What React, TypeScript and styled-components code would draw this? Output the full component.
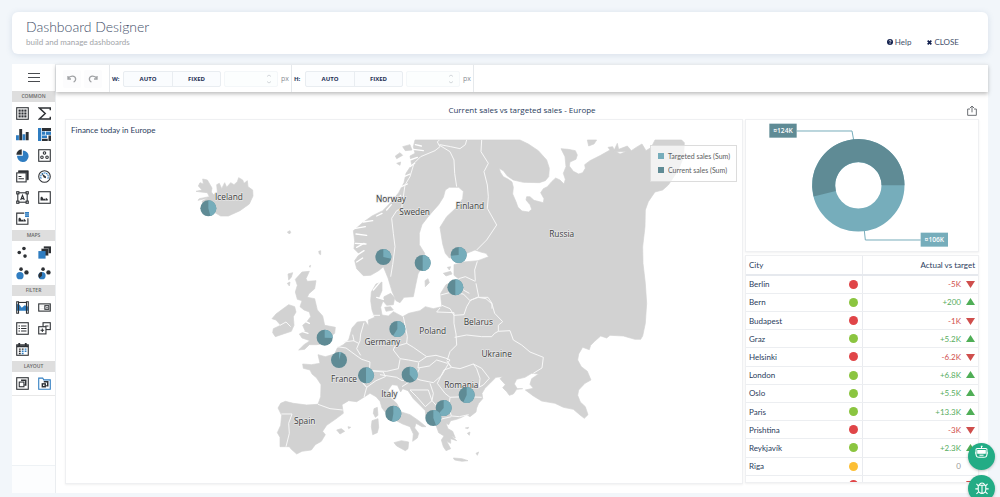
import React from 'react';
import styled, { createGlobalStyle, css } from 'styled-components';

const DARK = '#5f8b95';
const LIGHT = '#76adbb';
const INK = '#2a3c5c';
const BLUE = '#2f7dc1';
const COAL = '#2e3135';

const Global = createGlobalStyle`
  * { box-sizing: border-box; }
  body {
    margin: 0;
    background: #f2f6fa;
    color: ${INK};
    font-family: Lato, "Open Sans", sans-serif;
    font-size: 8px;
    line-height: 12px;
    overflow: hidden;
  }
  button, input { font: inherit; color: inherit; }
`;

const Page = styled.div`
  min-height: 100vh;
  display: flex;
  flex-direction: column;
  gap: 10px;
  padding: 12px 12px 4px;
`;

const Header = styled.header`
  display: flex;
  justify-content: space-between;
  align-items: flex-end;
  padding: 6px 29px 6px 14px;
  background: #fff;
  border-radius: 6px;
  box-shadow: 0 1px 6px rgba(90, 120, 160, 0.18);
`;

const Heading = styled.h1`
  margin: 0;
  font-size: 14px;
  line-height: 18px;
  font-weight: 300;
  color: #44506a;
`;

const SubHeading = styled.p`
  margin: 0;
  font-size: 8px;
  line-height: 12px;
  font-weight: 400;
  color: #a2a4a8;
`;

const HeaderActions = styled.div`
  display: flex;
  gap: 16px;
`;

const HeaderButton = styled.button`
  display: flex;
  align-items: center;
  gap: 2px;
  padding: 0;
  border: 0;
  background: none;
  font-size: 8px;
  line-height: 12px;
  font-weight: 400;
  color: #44506a;
`;

const Workspace = styled.main`
  flex: 1;
  display: flex;
  background: #fff;
`;

const Sidebar = styled.nav`
  display: flex;
  flex-direction: column;
  width: 44px;
  flex-shrink: 0;
  border-right: 1px solid #eaedf0;
`;

const MenuButton = styled.button`
  display: flex;
  align-items: center;
  justify-content: center;
  height: 27px;
  padding: 0;
  border: 0;
  background: #fff;
`;

const SectionLabel = styled.h2`
  margin: 0;
  background: #dedede;
  color: #666;
  font-family: "Open Sans", sans-serif;
  font-size: 5px;
  line-height: 11px;
  font-weight: 600;
  text-align: center;
`;

const ToolGrid = styled.div`
  display: grid;
  grid-template-columns: 1fr 1fr;
  grid-auto-rows: 21px;
  padding-bottom: 2px;
`;

const ToolButton = styled.button`
  display: flex;
  align-items: center;
  justify-content: center;
  padding: 1px 0 0;
  border: 0;
  background: none;
`;

const SidebarFooter = styled.div`
  margin-top: auto;
  height: 28px;
  border-top: 1px solid #eef2f5;
  background: #fcfdfe;
`;

const SidebarFill = styled.div`
  flex: 1;
  border-top: 1px solid #e8e8e8;
`;

const Main = styled.div`
  flex: 1;
  min-width: 0;
  display: flex;
  flex-direction: column;
`;

const Toolbar = styled.div`
  display: flex;
  height: 28px;
  background: #fff;
  border-top: 1px solid #e8ebee;
  box-shadow: 0 2px 4px rgba(0, 0, 0, 0.26);
`;

const ToolbarGroup = styled.div<{ $pad?: boolean }>`
  display: flex;
  align-items: center;
  gap: 3px;
  padding: 0 ${p => (p.$pad ? 7 : 2)}px;
  border-right: 1px solid #e6e9ec;
`;

const HistoryButton = styled.button`
  display: flex;
  align-items: center;
  justify-content: center;
  width: 18px;
  height: 18px;
  padding: 0;
  border: 0;
  border-radius: 2px;
  background: #fcfcfd;
`;

const Caption = styled.span<{ $strong?: boolean }>`
  width: 8px;
  font-family: "Open Sans", sans-serif;
  font-size: ${p => (p.$strong ? 6 : 7)}px;
  font-weight: ${p => (p.$strong ? 700 : 400)};
  color: ${p => (p.$strong ? '#26365a' : '#8b8f96')};
  white-space: nowrap;
`;

const Segments = styled.div`
  display: flex;
  height: 16px;
  border: 1px solid #e9edf1;
  border-radius: 2px;
  background: #fafcfe;
`;

const Segment = styled.button`
  width: 48px;
  padding: 0;
  border: 0;
  background: none;
  font-family: "Open Sans", sans-serif;
  font-size: 6px;
  font-weight: 700;
  color: #1f2f55;
  & + & { border-left: 1px solid #e9edf1; }
`;

const Spin = styled.label`
  display: flex;
  align-items: center;
  width: 54px;
  height: 16px;
  padding-right: 6px;
  border: 1px solid #f4f7f9;
  border-radius: 2px;
  background: #fcfefe;
`;

const SpinInput = styled.input`
  flex: 1;
  min-width: 0;
  padding: 0 3px;
  border: 0;
  outline: 0;
  background: none;
`;

const Board = styled.section`
  flex: 1;
  display: flex;
  flex-direction: column;
  padding: 9px;
`;

const BoardTitle = styled.div`
  display: grid;
  grid-template-columns: 1fr auto 1fr;
  align-items: center;
  height: 18px;
`;

const BoardName = styled.h2`
  grid-column: 2;
  margin: 0;
  font-family: "Open Sans", sans-serif;
  font-size: 8px;
  line-height: 12px;
  font-weight: 400;
`;

const ShareButton = styled.button`
  justify-self: end;
  display: flex;
  padding: 0;
  margin-right: 2px;
  border: 0;
  background: none;
`;

const Columns = styled.div`
  flex: 1;
  display: grid;
  grid-template-columns: minmax(0, 678fr) minmax(0, 234fr);
  gap: 2px;
`;

const card = css`
  background: #fff;
  border: 1px solid #eff0f2;
  box-shadow: 0 1px 2px rgba(0, 0, 0, 0.06);
`;

const MapCard = styled.article`
  ${card}
  position: relative;
  padding: 4px 0 0;
`;

const MapTitle = styled.h3`
  margin: 0;
  padding: 0 5px;
  font-size: 8px;
  line-height: 12px;
  font-weight: 400;
`;

const MapSvg = styled.svg`
  display: block;
  width: 100%;
`;

const Legend = styled.ul`
  position: absolute;
  top: 25px;
  right: 5px;
  margin: 0;
  padding: 3px 7px 4px;
  list-style: none;
  width: 87px;
  border: 1px solid #dcdcdc;
  background: rgba(255, 255, 255, 0.7);
  color: #5b5d60;
  font-size: 7px;
  line-height: 14px;
`;

const LegendItem = styled.li<{ $color: string }>`
  display: flex;
  align-items: center;
  gap: 4px;
  white-space: nowrap;
  &::before {
    content: '';
    flex-shrink: 0;
    width: 6px;
    height: 6px;
    background: ${p => p.$color};
  }
`;

const RightColumn = styled.div`
  display: grid;
  grid-template-rows: 133px 228px;
  gap: 3px;
`;

const DonutCard = styled.article`
  ${card}
`;

const TableCard = styled.article`
  ${card}
  overflow: hidden;
`;

const Table = styled.table`
  width: 100%;
  height: 238px;
  border-collapse: collapse;
  table-layout: fixed;
`;

const Th = styled.th<{ $right?: boolean }>`
  height: 19px;
  padding: 0 3px;
  border-bottom: 2px solid #e6e9ee;
  border-right: ${p => (p.$right ? 0 : 1)}px solid #e9ebef;
  font-weight: 400;
  text-align: ${p => (p.$right ? 'right' : 'left')};
`;

const Td = styled.td`
  height: 18px;
  padding: 0 3px;
  border-bottom: 1px solid #eceef1;
  & + & { border-left: 1px solid #e9ebef; }
`;

const Cell = styled.div<{ $end?: boolean; $color?: string }>`
  display: flex;
  align-items: center;
  justify-content: ${p => (p.$end ? 'flex-end' : 'space-between')};
  gap: 5px;
  padding-right: ${p => (p.$end ? 0 : 1)}px;
  color: ${p => p.$color || INK};
`;

const Dot = styled.span<{ $color: string }>`
  width: 9px;
  height: 9px;
  margin-left: auto;
  border-radius: 50%;
  background: ${p => p.$color};
`;

const FloatStack = styled.div`
  position: fixed;
  right: 5px;
  bottom: -5px;
  display: flex;
  flex-direction: column;
  gap: 5px;
`;

const FloatButton = styled.button<{ $raised?: boolean }>`
  display: flex;
  align-items: center;
  justify-content: center;
  width: 27px;
  height: 27px;
  padding: 0 0 ${p => (p.$raised ? 8 : 2)}px;
  border: 0;
  border-radius: 50%;
  background: #22ac85;
  box-shadow: 0 1px 3px rgba(0, 0, 0, 0.25);
`;

const Frame = ({ size = 32 }: { size?: number }) => (
  <rect x="2" y="2" width={size} height={size} fill="none" stroke={COAL} strokeWidth="3" />
);

const Picture = () => (
  <path d="M7 26v-8l4-3 5 8 4-3 2 6zM22 26v-7l5 4v3z" fill={COAL} />
);

const icons: Record<string, React.ReactNode> = {
  Table: (
    <>
      <Frame />
      {[7, 15, 23].map(y => [7, 15, 23].map(x => <rect key={`${x}-${y}`} x={x} y={y} width="6" height="6" fill={COAL} />))}
    </>
  ),
  Formula: <path d="M34 9V3H4l16 15L4 33h30v-6" fill="none" stroke={COAL} strokeWidth="4" />,
  'Bar chart': (
    <>
      <path d="M0 20h8v14H0zM18 17h8v17h-8z" fill={BLUE} />
      <path d="M9 3h8v31H9zM27 11h8v23h-8z" fill={COAL} />
    </>
  ),
  Treemap: (
    <>
      <path d="M0 0h9v36H0zM11 10h9v9h-9zM11 21h14v7H11z" fill={BLUE} />
      <path d="M11 0h25v8H11zM11 30h16v6H11zM29 21h7v15h-7z" fill={COAL} />
      <path d="M22 10h14v9H22z" fill={BLUE} />
    </>
  ),
  'Pie chart': (
    <>
      <path d="M19 4v15h-16a16 16 0 1 0 16-15z" fill={BLUE} />
      <path d="M16 1v15H1A15 15 0 0 1 16 1z" fill={COAL} />
    </>
  ),
  Scatter: (
    <>
      <Frame />
      {[[18, 11], [11, 23], [25, 23]].map(([x, y]) => (
        <circle key={x} cx={x} cy={y} r="3.5" fill="none" stroke={COAL} strokeWidth="3" />
      ))}
    </>
  ),
  Cards: (
    <>
      <path d="M7 2h27v25h-4V7H7z" fill={COAL} stroke={COAL} strokeWidth="2" />
      <rect x="2" y="8" width="26" height="25" fill="#fff" stroke={COAL} strokeWidth="3" />
      <path d="M7 18h8M7 24h15" stroke={COAL} strokeWidth="3" />
    </>
  ),
  Gauge: (
    <>
      <circle cx="18" cy="18" r="16" fill="none" stroke={COAL} strokeWidth="3" />
      <path d="M9 24a10.5 10.5 0 1 1 18 0" fill="none" stroke={BLUE} strokeWidth="3" strokeDasharray="5 1.5" />
      <path d="M10 9l6 12 6 2 0-5z" fill={COAL} />
    </>
  ),
  Text: (
    <>
      <rect x="5" y="5" width="26" height="26" fill="none" stroke={COAL} strokeWidth="3" />
      <path d="M13 25l5-13 5 13M14 21h8" fill="none" stroke={COAL} strokeWidth="3" />
      {[[5, 5], [31, 5], [5, 31], [31, 31]].map(([x, y]) => (
        <rect key={`${x}${y}`} x={x - 3} y={y - 3} width="6" height="6" fill="#fff" stroke={COAL} strokeWidth="3" />
      ))}
    </>
  ),
  Image: (
    <>
      <Frame />
      <Picture />
    </>
  ),
  'Image tiles': (
    <>
      <path d="M23 3H2v31h31V17" fill="none" stroke={COAL} strokeWidth="3" />
      <Picture />
      <path d="M25 0h11v14H25z" fill={BLUE} />
      <path d="M25 5h11M25 9h11" stroke="#fff" />
    </>
  ),
  Points: (
    <g fill={COAL}>
      <circle cx="22" cy="7" r="5" />
      <circle cx="9" cy="18" r="5" />
      <circle cx="25" cy="28" r="5" />
    </g>
  ),
  Layers: (
    <>
      <path d="M16 1h20v19H16z" fill={COAL} />
      <path d="M9 7h20v20H9z" fill={COAL} stroke="#fff" />
      <path d="M1 14h20v21H1z" fill={BLUE} />
    </>
  ),
  Bubbles: (
    <>
      <circle cx="11" cy="24" r="10" fill={BLUE} />
      <circle cx="14" cy="6" r="5" fill={COAL} />
      <circle cx="29" cy="15" r="6" fill={COAL} />
    </>
  ),
  'Map pies': (
    <>
      <circle cx="11" cy="24" r="10" fill={BLUE} />
      <path d="M11 24L4 31A10 10 0 0 1 11 14z" fill={COAL} />
      <circle cx="14" cy="6" r="5" fill={COAL} />
      <circle cx="29" cy="15" r="6" fill={COAL} />
    </>
  ),
  Range: (
    <>
      <path d="M2 27V8l7 2 7 9 8-7 10 4v11H2z" fill={BLUE} />
      <path d="M2 2h5v32H2zM29 2h5v32h-5z" fill="none" stroke={COAL} strokeWidth="3" />
      <path d="M7 4h22" stroke={COAL} strokeWidth="3" />
    </>
  ),
  Dropdown: (
    <>
      <rect x="2" y="8" width="32" height="20" fill="none" stroke={COAL} strokeWidth="3" />
      <path d="M7 14h10M7 21h10" stroke="#c9c9c9" />
      <rect x="19" y="13" width="11" height="10" fill="#fff" stroke={COAL} strokeWidth="3" />
      <path d="M22 17h6l-3 4z" fill={COAL} />
    </>
  ),
  List: (
    <>
      <Frame />
      <path d="M7 11h4M7 18h4M7 25h4M14 11h15M14 18h15M14 25h15" stroke={COAL} strokeWidth="3" />
    </>
  ),
  Nested: (
    <>
      <rect x="14" y="2" width="20" height="19" fill="none" stroke={COAL} strokeWidth="3" />
      <rect x="2" y="13" width="20" height="20" fill="#fff" stroke={COAL} strokeWidth="3" />
      <path d="M12 18v10M7 23h10M20 11h9" stroke={COAL} strokeWidth="3" />
    </>
  ),
  Calendar: (
    <>
      <rect x="2" y="5" width="32" height="29" fill="#fff" stroke={COAL} strokeWidth="3" />
      <path d="M2 9h32M9 0v9M27 0v9" stroke={COAL} strokeWidth="5" />
      <path d="M8 17h5M16 17h5M8 23h5M8 29h5" stroke={COAL} strokeWidth="4" />
      <path d="M24 17h5M16 23h5M24 23h5M16 29h5" stroke={BLUE} strokeWidth="4" />
    </>
  ),
  Container: (
    <>
      <Frame />
      <path d="M14 9h13v13h-4" fill="none" stroke={COAL} strokeWidth="4" />
      <rect x="9" y="14" width="13" height="13" fill="#fff" stroke={COAL} strokeWidth="3" />
    </>
  ),
  'Tab container': (
    <>
      <path d="M2 34V3h11l3 5h18v26z" fill="none" stroke={BLUE} strokeWidth="3" />
      <path d="M16 13h11v11h-4" fill="none" stroke={COAL} strokeWidth="4" />
      <rect x="10" y="17" width="12" height="12" fill={COAL} />
      <path d="M14 21h4v4h-4z" fill="#fff" />
    </>
  ),
};

const sections = [
  { title: 'COMMON', tools: ['Table', 'Formula', 'Bar chart', 'Treemap', 'Pie chart', 'Scatter', 'Cards', 'Gauge', 'Text', 'Image', 'Image tiles'] },
  { title: 'MAPS', tools: ['Points', 'Layers', 'Bubbles', 'Map pies'] },
  { title: 'FILTER', tools: ['Range', 'Dropdown', 'List', 'Nested', 'Calendar'] },
  { title: 'LAYOUT', tools: ['Container', 'Tab container'] },
];

const mainland =
  'M705 30H1020L1045 42L1075 62L1100 90L1108 115L1106 140L1096 152L1078 158L1030 157L1000 150L982 138L970 122L957 115L962 128L970 140L985 148L996 156L1000 172L998 192L1008 215L1014 232L1026 243L1046 246L1055 238L1050 224L1038 210L1040 200L1050 200L1062 211L1090 218L1092 206L1082 188L1090 176L1102 170L1115 155L1127 144L1140 150L1152 162L1156 148L1150 130L1158 110L1155 80L1143 56L1165 58L1186 62L1192 75L1188 88L1170 96L1168 108L1180 124L1196 132L1208 128L1216 115L1214 104L1230 92L1262 76L1290 60L1284 52L1298 50L1304 62L1320 72L1340 64L1300 66L1312 40L1316 58L1342 48L1354 62L1372 50L1386 42L1398 62L1414 52L1425 30H1505L1513 38L1511 80L1495 120L1465 165L1448 180L1425 186L1405 215L1396 240L1395 290L1388 350L1389 400L1396 460L1400 520L1396 580L1388 618L1382 628L1365 628L1330 618L1290 616L1280 624L1262 618L1244 634L1232 646L1228 659L1208 652L1196 672L1193 690L1204 710L1222 724L1233 750L1215 760L1196 780L1193 796L1201 816L1216 830L1224 854L1213 865L1200 855L1180 838L1150 832L1125 820L1085 813L1060 798L1036 780L1060 775L1050 763L1055 746L1076 732L1055 730L1035 742L1010 748L1003 762L1012 776L1028 776L1010 778L1000 792L988 796L980 785L968 773L976 764L960 746L968 740L948 742L930 760L915 775L906 790L908 806L896 820L890 834L888 846L870 860L860 854L845 862L830 868L812 872L806 884L798 880L804 896L818 904L826 924L812 916L830 932L812 926L812 940L800 934L812 956L798 962L790 950L784 930L792 918L776 908L768 886L756 880L738 864L736 842L720 826L700 806L684 782L668 776L662 786L652 766L636 764L625 780L628 800L650 820L664 846L690 854L716 872L738 890L726 890L708 880L704 894L716 910L712 924L698 934L700 912L690 890L668 882L645 870L622 854L606 834L600 814L588 800L570 790L548 804L530 815L506 812L486 824L490 850L466 868L440 886L428 904L436 914L424 934L406 944L394 960L366 964L350 972L334 958L328 950H300V922L292 908L302 886L305 856L294 834L302 820L316 814L340 820L380 825L414 823L422 800L423 764L410 744L396 732L390 720L370 715L368 702L394 704L420 700L414 674L436 680L464 672L472 654L490 644L506 630L516 594L532 576L556 574L566 588L565 570L584 562L576 540L572 512L574 486L588 462L606 456L606 482L596 504L610 510L602 532L606 555L625 558L640 545L668 560L686 550L720 542L736 530L760 536L786 530L783 508L782 490L798 464L808 460L818 476L836 470L838 448L822 436L822 404L850 396L894 392L926 380L918 370L905 367L885 360L855 372L830 382L808 384L796 370L788 342L780 292L800 260L830 232L848 206L850 184L836 172L808 172L796 180L790 202L776 224L746 258L726 284L718 310L718 344L734 370L732 400L714 432L706 470L700 500L672 502L660 518L648 512L636 484L624 444L610 410L596 422L572 436L550 437L530 416L524 392L538 372L522 356L524 334L520 302L548 278L576 258L608 242L636 214L656 188L672 158L678 130L695 104L690 78L705 70L700 50Z';

const islands = [
  'M48 184L66 180L55 168L60 158L70 162L68 147L82 150L96 174L94 186L100 194L112 186L110 164L118 160L125 176L134 158L140 172L152 158L162 164L172 155L176 143L188 150L192 160L202 152L204 170L218 180L219 198L208 222L180 242L145 258L122 258L98 244L72 228L66 214L84 204L54 211L58 206L88 200L82 188L62 186Z',
  'M366 426L388 424L378 446L382 454L408 452L404 476L386 492L382 502L404 506L412 540L428 558L434 586L446 588L466 592L464 610L448 622L438 640L410 644L388 644L374 658L356 660L372 644L390 632L366 624L358 612L376 604L368 586L380 576L392 560L388 546L372 540L360 530L366 512L352 508L346 486L352 466L346 448Z',
  'M278 608L280 596L302 586L288 570L276 566L288 552L304 540L326 524L344 530L348 546L340 560L342 586L334 604L310 612L286 620Z',
  'M612 500L632 490L644 504L640 524L620 526L610 514Z',
  'M614 532L632 530L640 540L618 544Z',
  'M735 452L744 446L748 458L736 470Z',
  'M790 430L812 424L816 432L798 438Z',
  'M802 412L812 410L808 420Z',
  'M582 836L592 832L594 856L586 862L580 850Z',
  'M576 872L594 866L596 892L592 908L578 914L574 890Z',
  'M642 938L664 932L686 936L684 956L676 962L650 948Z',
  'M470 900L484 896L494 904L480 912ZM504 890L512 892L506 896Z',
  'M820 984L846 986L864 992L846 994L824 990ZM888 970L896 966L892 976ZM862 910L870 906L868 916ZM856 894L866 892L864 896Z',
  'M324 432L338 428L334 442L326 450ZM322 460L330 456L328 468Z',
  'M416 364L422 362L422 374L418 372ZM388 408L392 406L390 412ZM322 306L330 302L332 308L328 312Z',
  'M1222 30H1250L1242 42L1226 48Z',
  'M646 78L660 68L668 76L650 86ZM668 50L690 44L696 60L676 62ZM650 100L662 96L660 106Z',
  'M798 910L812 904L822 916L808 918Z',
];

const fjords =
  'M522 296L556 290M528 312L560 316M526 340L558 342M530 352L552 340M530 376L552 362M530 396L548 384M550 276L578 272M590 258L606 250M620 240L634 224M650 210L662 196M664 170L682 162M672 140L690 132M690 110L704 100M690 90L712 82M700 58L730 62M706 44L724 48M376 574L388 580M366 604L384 610M604 452L580 480M448 622L426 626M610 508L590 502';

const borders =
  'M632 440L638 404L645 350L640 310L635 265L650 242L665 235L670 200L675 165L690 140L702 100L722 80L765 62L780 50L772 36L778 30' +
  'M776 44L810 65L822 90L824 130L830 170M780 44L812 50L840 56L856 44L860 30' +
  'M905 30L903 65L925 100L912 125L922 165L925 200L922 235L950 285L920 330L890 360' +
  'M892 394L884 420L886 452M836 446L856 440L886 454M782 495L808 488L850 492L870 512L896 500L888 460M896 502L924 502L936 520L936 536' +
  'M786 526L810 536L822 556L852 554L860 530L872 510M850 480L868 490M780 534L770 546L822 548L822 580L828 612L830 645L810 665L802 690' +
  'M872 510L895 502L918 506L936 522L944 550L968 575L955 586L955 604L944 610L935 620L905 620L860 615L824 622' +
  'M955 604L990 602L1000 630L1025 645L1050 666L1090 682L1086 714L1060 730' +
  'M670 560L676 590L682 620L680 640L644 650L640 660L660 686L686 690L716 696L740 680L700 652L680 640M740 680L768 676L796 684L810 690L802 700L770 690L748 708L714 714L716 698' +
  'M568 722L620 724L655 716L660 688M716 714L718 716L706 744L666 752L650 742L600 734M706 744L720 750L760 758L785 736L806 700L812 710M800 692L815 712L792 720L772 760L795 790L810 802L856 800L905 802' +
  'M815 712L840 716L880 702L890 716L900 745L898 770M880 702L905 715L928 745L910 765L896 772' +
  'M810 804L806 830L814 858L838 860L866 854M690 780L745 780L756 812L736 830L710 800L690 780M666 770L706 744M750 760L760 790L756 812L772 830L770 850M772 830L806 834M772 870L814 860' +
  'M414 823L450 836L488 840M304 852L336 852L326 880L328 910L318 950' +
  'M472 650L498 654L528 676L545 688L570 696L568 722L542 742M490 636L522 632L518 614M552 578L542 612L540 632L530 656L542 676' +
  'M542 742L570 722L610 726L616 740L588 752L560 772L546 756L560 772L552 802M576 556L600 556' +
  'M300 586L318 576L332 590M520 632L536 640';

const countries: [string, number, number][] = [
  ['Iceland', 147, 211],
  ['Norway', 633, 215],
  ['Sweden', 704, 254],
  ['Finland', 870, 236],
  ['Russia', 1145, 322],
  ['Belarus', 895, 585],
  ['Poland', 758, 612],
  ['Germany', 607, 645],
  ['Ukraine', 950, 681],
  ['France', 492, 757],
  ['Romania', 844, 774],
  ['Italy', 628, 802],
  ['Spain', 374, 881],
];

/* x, y and the angle, in degrees, that the targeted share covers */
const cityPies: [number, number, number][] = [
  [85, 235, 165], [610, 381, 102], [728, 399, 180], [836, 375, 265], [826, 472, 180],
  [434, 623, 92], [652, 597, 212], [477, 690, 16], [558, 736, 180], [689, 734, 140],
  [640, 851, 190], [860, 795, 205], [791, 834, 222], [760, 864, 160],
];

const slice = (x: number, y: number, r: number, angle: number) => {
  const a = (angle * Math.PI) / 180;
  return `M${x} ${y}V${y - r}A${r} ${r} 0 ${angle > 180 ? 1 : 0} 1 ${(x + r * Math.sin(a)).toFixed(1)} ${(y - r * Math.cos(a)).toFixed(1)}Z`;
};

const EuropeMap = () => (
  <MapSvg viewBox="-342 18 2028 1040" role="img" aria-label="Sales by city in Europe">
    <g fill="#d2d2d2" stroke="#d2d2d2" strokeWidth="2" strokeLinejoin="round">
      <path d={mainland} />
      {islands.map(d => <path key={d} d={d} />)}
    </g>
    <path d={fjords} stroke="#fff" strokeWidth="4" strokeLinecap="round" fill="none" />
    <path d={borders} stroke="#f8f8f8" strokeWidth="3" strokeLinejoin="round" fill="none" />
    <g fontFamily="Open Sans, sans-serif" fontSize="25" fill="#3c3d40" textAnchor="middle" stroke="#e6e6e6" strokeWidth="4" paintOrder="stroke">
      {countries.map(([name, x, y]) => <text key={name} x={x} y={y}>{name}</text>)}
    </g>
    {cityPies.map(([x, y, angle]) => (
      <g key={`${x}-${y}`}>
        <circle cx={x} cy={y} r="24" fill={DARK} />
        <path d={slice(x, y, 24, angle)} fill={LIGHT} />
      </g>
    ))}
  </MapSvg>
);

const Donut = () => (
  <MapSvg viewBox="18 30 696 392" role="img" aria-label="Current and targeted sales totals">
    <path d="M170 63H336L341 90" fill="none" stroke={LIGHT} strokeWidth="3" />
    <path d="M373 362L376 390H542" fill="none" stroke={LIGHT} strokeWidth="3" />
    <g fill="none" strokeWidth="69">
      <circle cx="355" cy="226" r="104" stroke={LIGHT} />
      <circle
        cx="355"
        cy="226"
        r="104"
        stroke={DARK}
        pathLength="360"
        strokeDasharray="194 166"
        transform="rotate(166 355 226)"
      />
    </g>
    <rect x="88" y="41" width="82" height="42" fill={DARK} />
    <rect x="542" y="368" width="82" height="42" fill={LIGHT} />
    <g fill="#fff" fontFamily="Open Sans, sans-serif" fontSize="20" fontWeight="600" textAnchor="middle">
      <text x="129" y="70">¤124K</text>
      <text x="583" y="397">¤106K</text>
    </g>
  </MapSvg>
);

const RED = '#e04548';
const GREEN = '#8bc540';
const AMBER = '#fcbf35';

const rows: [string, string, number][] = [
  ['Berlin', '-5K', -1],
  ['Bern', '+200', 1],
  ['Budapest', '-1K', -1],
  ['Graz', '+5.2K', 1],
  ['Helsinki', '-6.2K', -1],
  ['London', '+6.8K', 1],
  ['Oslo', '+5.5K', 1],
  ['Paris', '+13.3K', 1],
  ['Prishtina', '-3K', -1],
  ['Reykjavík', '+2.3K', 1],
  ['Riga', '0', 0],
  ['', '', -1],
];

const Trend = ({ sign }: { sign: number }) => (
  <svg width="9" height="8" viewBox="0 0 9 8" aria-hidden="true">
    {sign > 0 && <path d="M0 7L4.500 0L9 7Z" fill="#4fae56" />}
    {sign < 0 && <path d="M0 1H9L4.500 8Z" fill="#cf4e4c" />}
  </svg>
);

const SizeGroup = ({ label, name }: { label: string; name: string }) => (
  <ToolbarGroup>
    <Caption $strong>{label}</Caption>
    <Segments>
      <Segment>AUTO</Segment>
      <Segment>FIXED</Segment>
    </Segments>
    <Spin>
      <SpinInput aria-label={name} />
      <svg width="4" height="10" viewBox="0 0 4 10" fill="none" stroke="#d3d7db">
        <path d="M0 2.500L2 1L4 2.500M0 7.500L2 9L4 7.500" />
      </svg>
    </Spin>
    <Caption>px</Caption>
  </ToolbarGroup>
);

const History = ({ flip }: { flip?: boolean }) => (
  <svg width="10" height="8" viewBox="0 0 30 24" fill="none" stroke="#a0a2a5" strokeWidth="4">
    <g transform={flip ? 'translate(30 0) scale(-1 1)' : undefined}>
      <path d="M3 3v9h9M3 11C9 1 25 1 26 12C26 17 23 20 20 21" />
    </g>
  </svg>
);

export default function App() {
  return (
    <>
      <Global />
      <Page>
        <Header>
          <div>
            <Heading>Dashboard Designer</Heading>
            <SubHeading>build and manage dashboards</SubHeading>
          </div>
          <HeaderActions>
            <HeaderButton>
              <svg width="6" height="6" viewBox="0 0 18 18" aria-hidden="true">
                <circle cx="9" cy="9" r="9" fill="#101e4c" />
                <path d="M6 7c0-4 6-4 6-.5C12 9 9 8.500 9 11M9 12.500v3" fill="none" stroke="#fff" strokeWidth="2.500" />
              </svg>
              Help
            </HeaderButton>
            <HeaderButton>
              <svg width="5" height="5" viewBox="0 0 15 15" stroke="#101e4c" strokeWidth="5" aria-hidden="true">
                <path d="M2 2L13 13M13 2L2 13" />
              </svg>
              CLOSE
            </HeaderButton>
          </HeaderActions>
        </Header>

        <Workspace>
          <Sidebar>
            <MenuButton aria-label="Menu">
              <svg width="12" height="9" viewBox="0 0 12 9" stroke="#4a4c50" strokeWidth="1">
                <path d="M0 .5H12M0 4.500H12M0 8.500H12" />
              </svg>
            </MenuButton>
            {sections.map(s => (
              <section key={s.title}>
                <SectionLabel>{s.title}</SectionLabel>
                <ToolGrid>
                  {s.tools.map(t => (
                    <ToolButton key={t} aria-label={t}>
                      <svg width="13" height="13" viewBox="0 0 36 36">{icons[t]}</svg>
                    </ToolButton>
                  ))}
                </ToolGrid>
              </section>
            ))}
            <SidebarFill />
            <SidebarFooter />
          </Sidebar>

          <Main>
            <Toolbar>
              <ToolbarGroup $pad>
                <HistoryButton aria-label="Undo"><History /></HistoryButton>
                <HistoryButton aria-label="Redo"><History flip /></HistoryButton>
              </ToolbarGroup>
              <SizeGroup label="W:" name="Width" />
              <SizeGroup label="H:" name="Height" />
            </Toolbar>

            <Board>
              <BoardTitle>
                <BoardName>Current sales vs targeted sales - Europe</BoardName>
                <ShareButton aria-label="Share">
                  <svg width="10" height="11" viewBox="0 0 30 33" fill="none" stroke="#6d7075" strokeWidth="3">
                    <path d="M9 12H2V31H28V12H21M15 22V3M9 9L15 3L21 9" />
                  </svg>
                </ShareButton>
              </BoardTitle>
              <Columns>
                <MapCard>
                  <MapTitle>Finance today in Europe</MapTitle>
                  <EuropeMap />
                  <Legend>
                    <LegendItem $color={LIGHT}>Targeted sales (Sum)</LegendItem>
                    <LegendItem $color={DARK}>Current sales (Sum)</LegendItem>
                  </Legend>
                </MapCard>
                <RightColumn>
                  <DonutCard><Donut /></DonutCard>
                  <TableCard>
                    <Table>
                      <thead>
                        <tr>
                          <Th>City</Th>
                          <Th $right>Actual vs target</Th>
                        </tr>
                      </thead>
                      <tbody>
                        {rows.map(([city, value, sign]) => (
                          <tr key={city}>
                            <Td>
                              <Cell>
                                {city}
                                <Dot $color={sign > 0 ? GREEN : sign < 0 ? RED : AMBER} />
                              </Cell>
                            </Td>
                            <Td>
                              <Cell $end $color={sign > 0 ? '#58ad5f' : sign < 0 ? '#d0504e' : '#999'}>
                                {value}
                                <Trend sign={sign} />
                              </Cell>
                            </Td>
                          </tr>
                        ))}
                      </tbody>
                    </Table>
                  </TableCard>
                </RightColumn>
              </Columns>
            </Board>
          </Main>
        </Workspace>
      </Page>

      <FloatStack>
        <FloatButton $raised aria-label="Assistant">
          <svg width="15" height="15" viewBox="0 0 42 44" fill="none" stroke="#fff" strokeWidth="3">
            <path d="M21 10V4M19 4h5M4 20v7M38 20v7M9 10h24a4 4 0 0 1 4 5v12c0 5-4 9-9 9H14c-5 0-9-4-9-9V15a4 4 0 0 1 4-5z" />
            <path d="M10 16h22v8H10z" fill="#fff" />
            <path d="M15 30h12" />
          </svg>
        </FloatButton>
        <FloatButton aria-label="Report a bug">
          <svg width="14" height="14" viewBox="0 0 39 39" fill="none" stroke="#fff" strokeWidth="3">
            <path d="M12 11a8 8 0 0 1 15 0M9 12h21v12a10 10 0 0 1-21 0zM19.500 12v22M1 22h8M30 22h8M4 8l6 6M35 8l-6 6M4 36l6-6M35 36l-6-6" />
          </svg>
        </FloatButton>
      </FloatStack>
    </>
  );
}
